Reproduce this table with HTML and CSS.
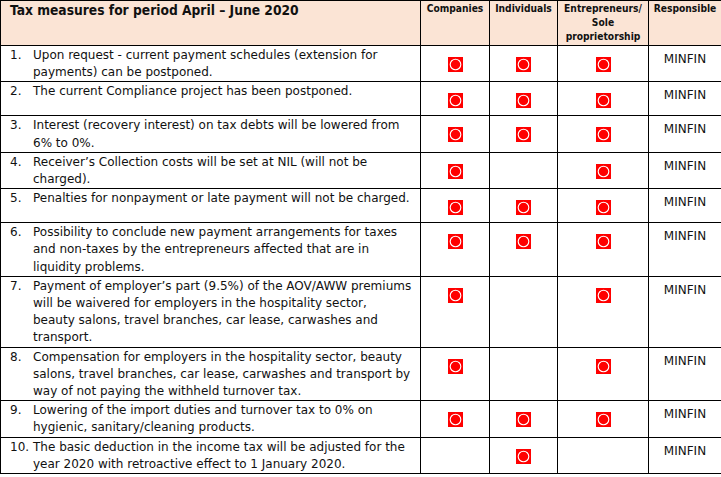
FILE: index.html
```html
<!DOCTYPE html>
<html lang="en">
<head>
<meta charset="utf-8">
<title>Tax measures for period April – June 2020</title>
<link rel="stylesheet" href="styles.css">
</head>
<body>
<svg width="0" height="0" class="defs" aria-hidden="true">
  <symbol id="mark" viewBox="0 0 15 15">
    <rect x="0" y="0" width="15" height="15" fill="#ff0000"/>
    <circle cx="7.5" cy="7.5" r="5.3" fill="none" stroke="#ffffff" stroke-width="1.1"/>
  </symbol>
</svg>
<table class="measures">
  <colgroup>
    <col class="c-measure"><col class="c-comp"><col class="c-ind"><col class="c-ent"><col class="c-resp">
  </colgroup>
  <thead>
    <tr>
      <th class="title">Tax measures for period April – June 2020</th>
      <th class="colhead">Companies</th>
      <th class="colhead">Individuals</th>
      <th class="colhead">Entrepreneurs/ Sole proprietorship</th>
      <th class="colhead">Responsible</th>
    </tr>
  </thead>
  <tbody>
    <tr>
      <td class="measure"><div class="item"><span class="num">1.</span><span class="txt">Upon request - current payment schedules (extension for payments) can be postponed.</span></div></td>
      <td class="mark"><svg class="icon"><use href="#mark"/></svg></td>
      <td class="mark"><svg class="icon"><use href="#mark"/></svg></td>
      <td class="mark"><svg class="icon"><use href="#mark"/></svg></td>
      <td class="resp">MINFIN</td>
    </tr>
    <tr>
      <td class="measure"><div class="item"><span class="num">2.</span><span class="txt">The current Compliance project has been postponed.</span></div></td>
      <td class="mark"><svg class="icon"><use href="#mark"/></svg></td>
      <td class="mark"><svg class="icon"><use href="#mark"/></svg></td>
      <td class="mark"><svg class="icon"><use href="#mark"/></svg></td>
      <td class="resp">MINFIN</td>
    </tr>
    <tr>
      <td class="measure"><div class="item"><span class="num">3.</span><span class="txt">Interest (recovery interest) on tax debts will be lowered from 6% to 0%.</span></div></td>
      <td class="mark"><svg class="icon"><use href="#mark"/></svg></td>
      <td class="mark"><svg class="icon"><use href="#mark"/></svg></td>
      <td class="mark"><svg class="icon"><use href="#mark"/></svg></td>
      <td class="resp">MINFIN</td>
    </tr>
    <tr>
      <td class="measure"><div class="item"><span class="num">4.</span><span class="txt">Receiver’s Collection costs will be set at NIL (will not be charged).</span></div></td>
      <td class="mark"><svg class="icon"><use href="#mark"/></svg></td>
      <td class="mark"></td>
      <td class="mark"><svg class="icon"><use href="#mark"/></svg></td>
      <td class="resp">MINFIN</td>
    </tr>
    <tr>
      <td class="measure"><div class="item"><span class="num">5.</span><span class="txt">Penalties for nonpayment or late payment will not be charged.</span></div></td>
      <td class="mark"><svg class="icon"><use href="#mark"/></svg></td>
      <td class="mark"><svg class="icon"><use href="#mark"/></svg></td>
      <td class="mark"><svg class="icon"><use href="#mark"/></svg></td>
      <td class="resp">MINFIN</td>
    </tr>
    <tr>
      <td class="measure"><div class="item"><span class="num">6.</span><span class="txt">Possibility to conclude new payment arrangements for taxes and non-taxes by the entrepreneurs affected that are in liquidity problems.</span></div></td>
      <td class="mark"><svg class="icon"><use href="#mark"/></svg></td>
      <td class="mark"><svg class="icon"><use href="#mark"/></svg></td>
      <td class="mark"><svg class="icon"><use href="#mark"/></svg></td>
      <td class="resp">MINFIN</td>
    </tr>
    <tr>
      <td class="measure"><div class="item"><span class="num">7.</span><span class="txt">Payment of employer’s part (9.5%) of the AOV/AWW premiums will be waivered for employers in the hospitality sector, beauty salons, travel branches, car lease, carwashes and transport.</span></div></td>
      <td class="mark"><svg class="icon"><use href="#mark"/></svg></td>
      <td class="mark"></td>
      <td class="mark"><svg class="icon"><use href="#mark"/></svg></td>
      <td class="resp">MINFIN</td>
    </tr>
    <tr>
      <td class="measure"><div class="item"><span class="num">8.</span><span class="txt">Compensation for employers in the hospitality sector, beauty salons, travel branches, car lease, carwashes and transport by way of not paying the withheld turnover tax.</span></div></td>
      <td class="mark"><svg class="icon"><use href="#mark"/></svg></td>
      <td class="mark"></td>
      <td class="mark"><svg class="icon"><use href="#mark"/></svg></td>
      <td class="resp">MINFIN</td>
    </tr>
    <tr>
      <td class="measure"><div class="item"><span class="num">9.</span><span class="txt">Lowering of the import duties and turnover tax to 0% on hygienic, sanitary/cleaning products.</span></div></td>
      <td class="mark"><svg class="icon"><use href="#mark"/></svg></td>
      <td class="mark"><svg class="icon"><use href="#mark"/></svg></td>
      <td class="mark"><svg class="icon"><use href="#mark"/></svg></td>
      <td class="resp">MINFIN</td>
    </tr>
    <tr>
      <td class="measure"><div class="item"><span class="num">10.</span><span class="txt">The basic deduction in the income tax will be adjusted for the year 2020 with retroactive effect to 1 January 2020.</span></div></td>
      <td class="mark"></td>
      <td class="mark"><svg class="icon"><use href="#mark"/></svg></td>
      <td class="mark"></td>
      <td class="resp">MINFIN</td>
    </tr>
  </tbody>
</table>
</body>
</html>
```
FILE: styles.css
```css
html, body {
  margin: 0;
  padding: 0;
  background: #ffffff;
}

body {
  font-family: "DejaVu Sans", sans-serif;
  font-size: 12px;
  color: #111111;
}

.defs {
  position: absolute;
  width: 0;
  height: 0;
  overflow: hidden;
}

.measures {
  border-collapse: collapse;
  table-layout: fixed;
  width: 721px;
}

.c-measure { width: 420px; }
.c-comp { width: 69px; }
.c-ind { width: 68px; }
.c-ent { width: 91px; }
.c-resp { width: 73px; }

.measures th,
.measures td {
  border: 1px solid #000000;
  vertical-align: top;
  padding: 0;
}

.measures thead th {
  background: #fbe4d5;
  height: 43px;
}

.measures .title {
  font-family: "DejaVu Sans Condensed", "DejaVu Sans", sans-serif;
  text-align: left;
  font-size: 13.7px;
  font-weight: bold;
  line-height: 17px;
  padding: 1px 8px 0 9px;
}

.measures .colhead {
  font-family: "DejaVu Sans Condensed", "DejaVu Sans", sans-serif;
  font-size: 10.2px;
  font-weight: bold;
  line-height: 14.2px;
  text-align: center;
  padding: 1px 2px 0;
}

.measures .measure {
  padding: 1px 8px 0 9px;
  line-height: 17.2px;
}

.item {
  display: flex;
}

.num {
  flex: none;
  width: 23px;
}

.txt {
  flex: 1;
}

.measures .mark {
  text-align: center;
  padding: 11px 0 7px;
  line-height: 0;
}

.icon {
  width: 15px;
  height: 15px;
  display: inline-block;
}

.measures .resp {
  text-align: center;
  line-height: 17.2px;
  padding: 5px 2px 0;
}
```
